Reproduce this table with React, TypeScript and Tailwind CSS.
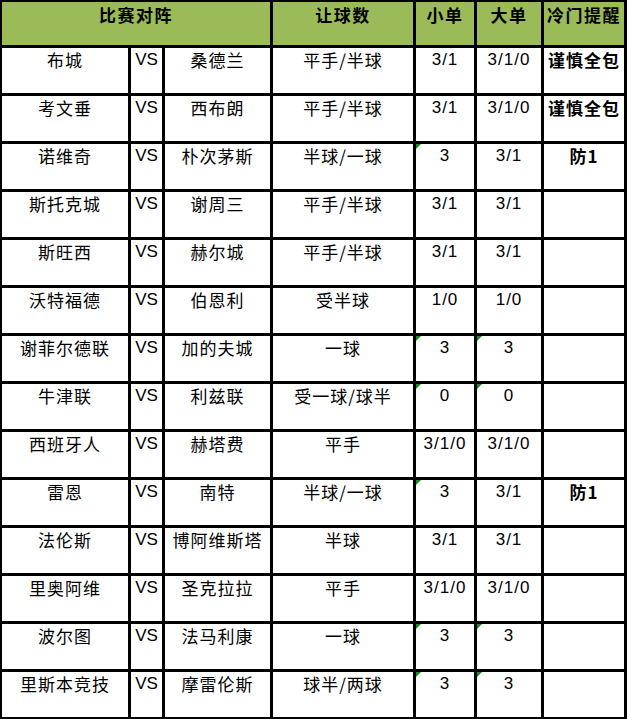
import React from 'react';

type Match = {
  home: string;
  away: string;
  handicap: string;
  small: string;
  big: string;
  tip?: string;
};

const matches: Match[] = [
  { home: '布城', away: '桑德兰', handicap: '平手/半球', small: '3/1', big: '3/1/0', tip: '谨慎全包' },
  { home: '考文垂', away: '西布朗', handicap: '平手/半球', small: '3/1', big: '3/1/0', tip: '谨慎全包' },
  { home: '诺维奇', away: '朴次茅斯', handicap: '半球/一球', small: '3', big: '3/1', tip: '防1' },
  { home: '斯托克城', away: '谢周三', handicap: '平手/半球', small: '3/1', big: '3/1' },
  { home: '斯旺西', away: '赫尔城', handicap: '平手/半球', small: '3/1', big: '3/1' },
  { home: '沃特福德', away: '伯恩利', handicap: '受半球', small: '1/0', big: '1/0' },
  { home: '谢菲尔德联', away: '加的夫城', handicap: '一球', small: '3', big: '3' },
  { home: '牛津联', away: '利兹联', handicap: '受一球/球半', small: '0', big: '0' },
  { home: '西班牙人', away: '赫塔费', handicap: '平手', small: '3/1/0', big: '3/1/0' },
  { home: '雷恩', away: '南特', handicap: '半球/一球', small: '3', big: '3/1', tip: '防1' },
  { home: '法伦斯', away: '博阿维斯塔', handicap: '半球', small: '3/1', big: '3/1' },
  { home: '里奥阿维', away: '圣克拉拉', handicap: '平手', small: '3/1/0', big: '3/1/0' },
  { home: '波尔图', away: '法马利康', handicap: '一球', small: '3', big: '3' },
  { home: '里斯本竞技', away: '摩雷伦斯', handicap: '球半/两球', small: '3', big: '3' },
];

const cjk = "font-['Noto_Sans_CJK_SC',sans-serif]";
const latin = "font-['Liberation_Sans','Noto_Sans_CJK_SC',sans-serif]";

// Excel's "number stored as text" marker
function Flag() {
  return (
    <span className="absolute left-0 top-0 h-0 w-0 border-r-[5px] border-t-[5px] border-r-transparent border-t-[#1e8a1e]" />
  );
}

function Text({ children }: { children: React.ReactNode }) {
  return (
    <div className={`bg-white text-center text-[17px] leading-[24px] tracking-[1px] text-black whitespace-nowrap ${cjk}`}>
      {children}
    </div>
  );
}

function Num({ value }: { value: string }) {
  const flagged = !value.includes('/');
  return (
    <div className={`relative bg-white text-center text-[17px] leading-[24px] tracking-[1px] text-black ${latin}`}>
      {flagged && <Flag />}
      {value}
    </div>
  );
}

function Header({ children, span }: { children: React.ReactNode; span?: boolean }) {
  return (
    <div
      className={`bg-[#9bbb59] text-center text-[17px] font-bold leading-[26px] tracking-[1.5px] text-black whitespace-nowrap overflow-hidden ${cjk} ${
        span ? 'col-span-3' : ''
      }`}
    >
      {children}
    </div>
  );
}

export default function App() {
  return (
    <div className="w-[627px] h-[719px] bg-white">
      <div className="grid grid-cols-[126px_31px_105px_140px_58px_64px_80px] grid-rows-[43px_repeat(14,45px)] gap-[3px] bg-black pl-[2px] pt-[2px] pr-[3px] pb-[2px]">
        <Header span>比赛对阵</Header>
        <Header>让球数</Header>
        <Header>小单</Header>
        <Header>大单</Header>
        <Header>冷门提醒</Header>

        {matches.map((m, i) => (
          <React.Fragment key={i}>
            <Text>{m.home}</Text>
            <div className="bg-white text-center text-[17px] leading-[24px] text-black font-['Liberation_Sans_Narrow','Liberation_Sans',sans-serif]">
              VS
            </div>
            <Text>{m.away}</Text>
            <Text>{m.handicap}</Text>
            <Num value={m.small} />
            <Num value={m.big} />
            <div className={`overflow-hidden bg-white text-center text-[17px] font-bold leading-[24px] tracking-[1px] text-black whitespace-nowrap ${cjk}`}>
              {m.tip}
            </div>
          </React.Fragment>
        ))}
      </div>
    </div>
  );
}
